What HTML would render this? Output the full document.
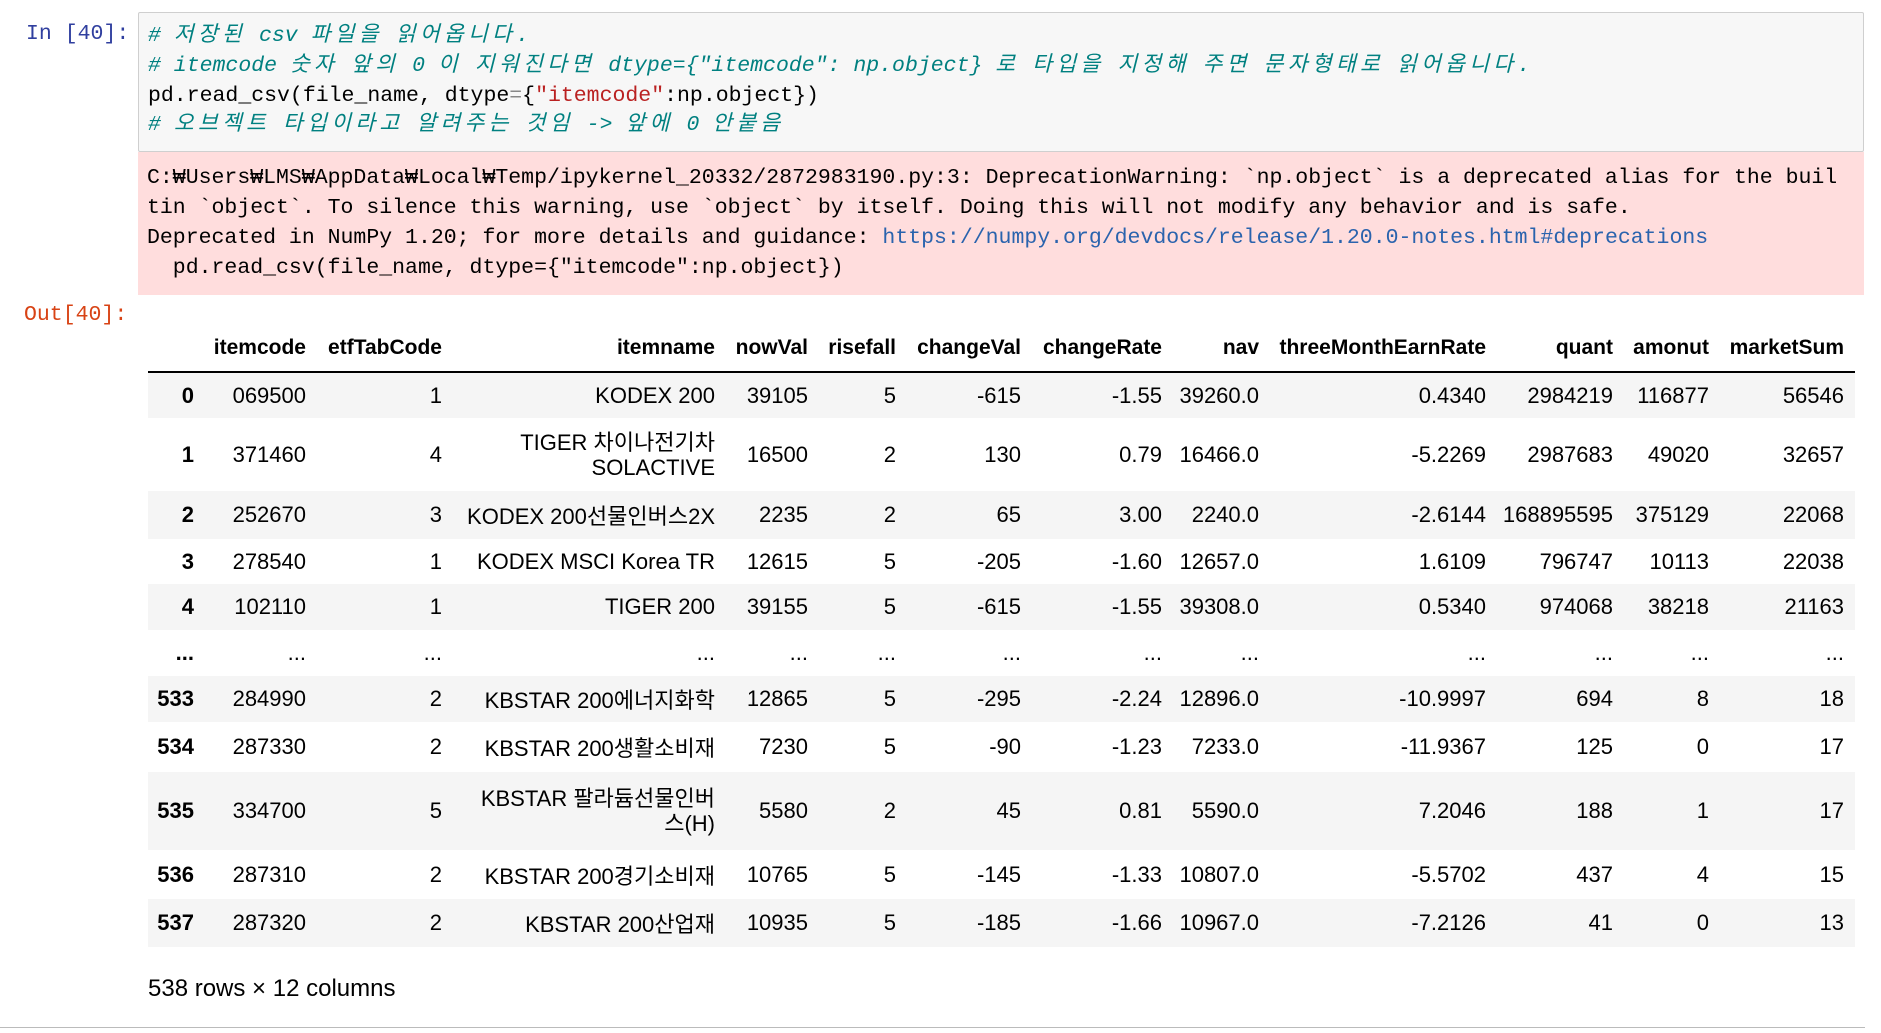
<!DOCTYPE html>
<html><head><meta charset="utf-8">
<style>
*{margin:0;padding:0;box-sizing:border-box}
body{width:1881px;height:1033px;background:#fff;position:relative;overflow:hidden;font-family:"Liberation Sans","Noto Sans CJK KR",sans-serif}
.mono{font-family:"Liberation Mono","Noto Sans CJK KR",monospace;font-size:21.5px;letter-spacing:0;white-space:pre}
.k{letter-spacing:4.3px}
.pin{position:absolute;left:26px;top:22px;color:#303F9F}
.pout{position:absolute;left:24px;top:303px;color:#D84315}
.code{position:absolute;left:138px;top:12px;width:1726px;height:140px;background:#f7f7f7;border:1px solid #cfcfcf;border-radius:2px}
.code div,.err div{position:absolute;left:9px;height:30px;line-height:30px}
.c{color:#008080;font-style:italic}
.s{color:#ba2121}
.err{position:absolute;left:138px;top:152px;width:1726px;height:143px;background:#fdd}
a{color:#2a63ad;text-decoration:none}
table{position:absolute;left:148px;top:325px;border-collapse:collapse;table-layout:fixed;width:1707px;font-size:22px;color:#000}
th,td{padding:0;text-align:right;white-space:nowrap;vertical-align:middle}
thead th{font-size:21px;height:47px;border-bottom:2px solid #000;vertical-align:middle}
tbody th{font-weight:bold}
tr.g{background:#f5f5f5}
td.w{line-height:25px}
.foot{position:absolute;left:148px;top:975px;font-size:24px}
.line{position:absolute;left:0;right:16px;top:1027px;border-top:1px solid #bbb}
</style></head><body>
<div class="mono pin">In [40]:</div>
<div class="code">
<div class="mono c" style="top:8px"># <span class="k">저장된</span> csv <span class="k">파일을</span> <span class="k">읽어옵니다</span>.</div>
<div class="mono c" style="top:38px"># itemcode <span class="k">숫자</span> <span class="k">앞의</span> 0 <span class="k">이</span> <span class="k">지워진다면</span> dtype={"itemcode": np.object} <span class="k">로</span> <span class="k">타입을</span> <span class="k">지정해</span> <span class="k">주면</span> <span class="k">문자형태로</span> <span class="k">읽어옵니다</span>.</div>
<div class="mono" style="top:68px">pd.read_csv(file_name, dtype<span style="color:#888">=</span>{<span class="s">"itemcode"</span>:np.object})</div>
<div class="mono c" style="top:97px"># <span class="k">오브젝트</span> <span class="k">타입이라고</span> <span class="k">알려주는</span> <span class="k">것임</span> -&gt; <span class="k">앞에</span> 0 <span class="k">안붙음</span></div>
</div>
<div class="err">
<div class="mono" style="top:11px">C:₩Users₩LMS₩AppData₩Local₩Temp/ipykernel_20332/2872983190.py:3: DeprecationWarning: `np.object` is a deprecated alias for the buil</div>
<div class="mono" style="top:41px">tin `object`. To silence this warning, use `object` by itself. Doing this will not modify any behavior and is safe.</div>
<div class="mono" style="top:71px">Deprecated in NumPy 1.20; for more details and guidance: <a>https://numpy.org/devdocs/release/1.20.0-notes.html#deprecations</a></div>
<div class="mono" style="top:101px">  pd.read_csv(file_name, dtype={"itemcode":np.object})</div>
</div>
<div class="mono pout">Out[40]:</div>
<table>
<colgroup><col style="width:46px"><col style="width:112px"><col style="width:136px"><col style="width:273px"><col style="width:93px"><col style="width:88px"><col style="width:125px"><col style="width:141px"><col style="width:97px"><col style="width:227px"><col style="width:127px"><col style="width:96px"><col style="width:146px"></colgroup>
<thead><tr><th></th><th>itemcode</th><th>etfTabCode</th><th>itemname</th><th>nowVal</th><th>risefall</th><th>changeVal</th><th>changeRate</th><th>nav</th><th>threeMonthEarnRate</th><th>quant</th><th>amonut</th><th style="padding-right:11px">marketSum</th></tr></thead>
<tbody>
<tr class="g" style="height:46px"><th>0</th><td>069500</td><td>1</td><td>KODEX 200</td><td>39105</td><td>5</td><td>-615</td><td>-1.55</td><td>39260.0</td><td>0.4340</td><td>2984219</td><td>116877</td><td style="padding-right:11px">56546</td></tr>
<tr style="height:73px"><th>1</th><td>371460</td><td>4</td><td class="w">TIGER 차이나전기차<br>SOLACTIVE</td><td>16500</td><td>2</td><td>130</td><td>0.79</td><td>16466.0</td><td>-5.2269</td><td>2987683</td><td>49020</td><td style="padding-right:11px">32657</td></tr>
<tr class="g" style="height:48px"><th>2</th><td>252670</td><td>3</td><td>KODEX 200선물인버스2X</td><td>2235</td><td>2</td><td>65</td><td>3.00</td><td>2240.0</td><td>-2.6144</td><td>168895595</td><td>375129</td><td style="padding-right:11px">22068</td></tr>
<tr style="height:45px"><th>3</th><td>278540</td><td>1</td><td>KODEX MSCI Korea TR</td><td>12615</td><td>5</td><td>-205</td><td>-1.60</td><td>12657.0</td><td>1.6109</td><td>796747</td><td>10113</td><td style="padding-right:11px">22038</td></tr>
<tr class="g" style="height:46px"><th>4</th><td>102110</td><td>1</td><td>TIGER 200</td><td>39155</td><td>5</td><td>-615</td><td>-1.55</td><td>39308.0</td><td>0.5340</td><td>974068</td><td>38218</td><td style="padding-right:11px">21163</td></tr>
<tr style="height:46px"><th>...</th><td>...</td><td>...</td><td>...</td><td>...</td><td>...</td><td>...</td><td>...</td><td>...</td><td>...</td><td>...</td><td>...</td><td style="padding-right:11px">...</td></tr>
<tr class="g" style="height:46px"><th>533</th><td>284990</td><td>2</td><td>KBSTAR 200에너지화학</td><td>12865</td><td>5</td><td>-295</td><td>-2.24</td><td>12896.0</td><td>-10.9997</td><td>694</td><td>8</td><td style="padding-right:11px">18</td></tr>
<tr style="height:50px"><th>534</th><td>287330</td><td>2</td><td>KBSTAR 200생활소비재</td><td>7230</td><td>5</td><td>-90</td><td>-1.23</td><td>7233.0</td><td>-11.9367</td><td>125</td><td>0</td><td style="padding-right:11px">17</td></tr>
<tr class="g" style="height:78px"><th>535</th><td>334700</td><td>5</td><td class="w">KBSTAR 팔라듐선물인버<br>스(H)</td><td>5580</td><td>2</td><td>45</td><td>0.81</td><td>5590.0</td><td>7.2046</td><td>188</td><td>1</td><td style="padding-right:11px">17</td></tr>
<tr style="height:49px"><th>536</th><td>287310</td><td>2</td><td>KBSTAR 200경기소비재</td><td>10765</td><td>5</td><td>-145</td><td>-1.33</td><td>10807.0</td><td>-5.5702</td><td>437</td><td>4</td><td style="padding-right:11px">15</td></tr>
<tr class="g" style="height:48px"><th>537</th><td>287320</td><td>2</td><td>KBSTAR 200산업재</td><td>10935</td><td>5</td><td>-185</td><td>-1.66</td><td>10967.0</td><td>-7.2126</td><td>41</td><td>0</td><td style="padding-right:11px">13</td></tr>
</tbody></table>
<div class="foot">538 rows × 12 columns</div>
<div class="line"></div>
</body></html>
